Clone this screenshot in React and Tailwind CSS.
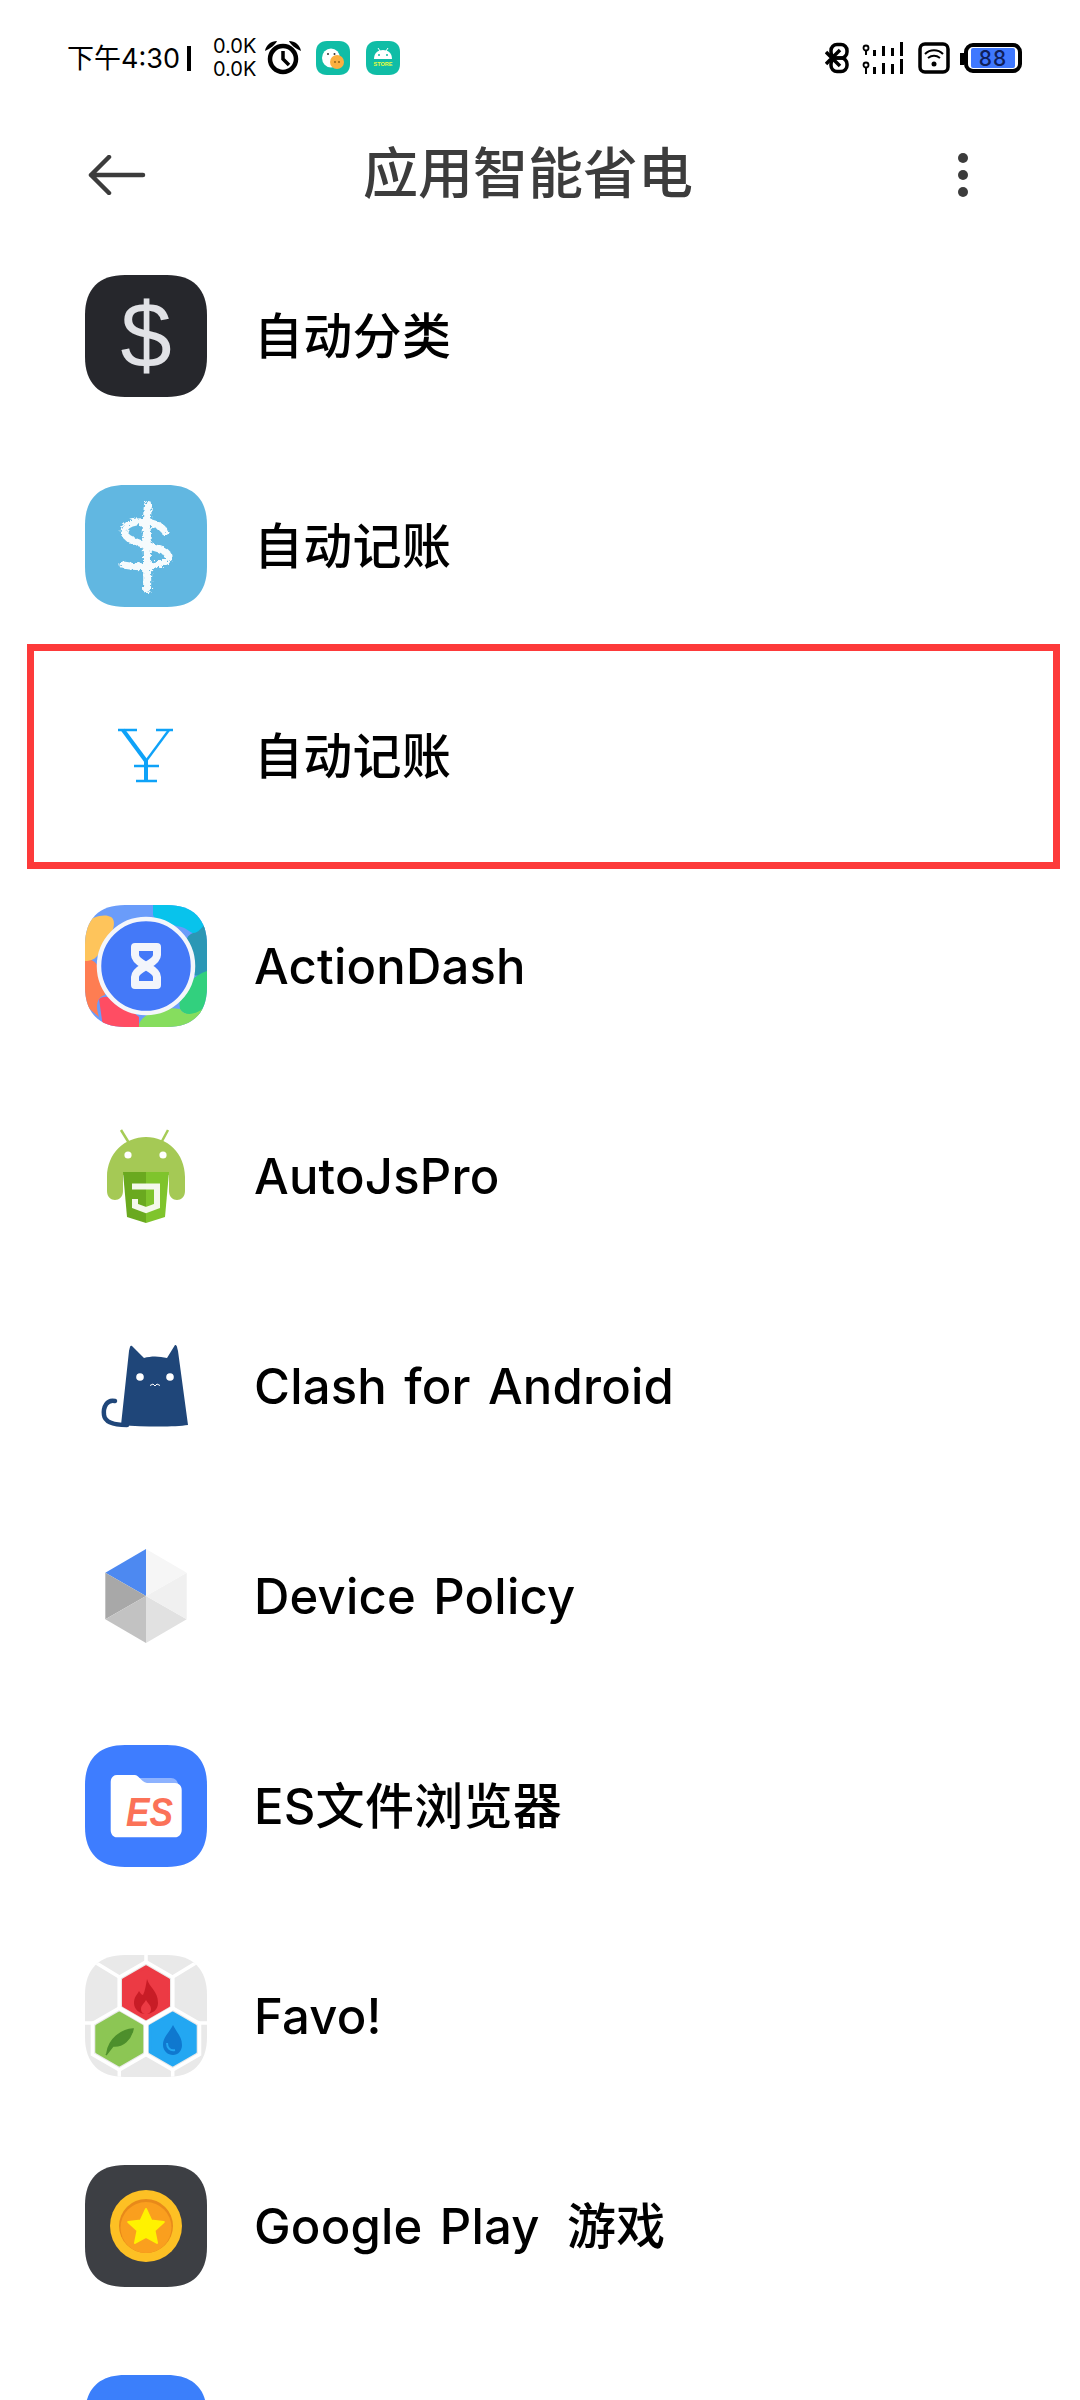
import React from "react";

const SQ = "M40 0H82C108 0 122 14 122 40V82C122 108 108 122 82 122H40C14 122 0 108 0 82V40C0 14 14 0 40 0Z";
const MINI = "M11 0H23C30 0 34 4 34 11V23C34 30 30 34 23 34H11C4 34 0 30 0 23V11C0 4 4 0 11 0Z";
const hex = (cx, cy, r) => {
  const w = r * 0.866;
  return `M${cx} ${cy - r}L${cx + w} ${cy - r / 2}V${cy + r / 2}L${cx} ${cy + r}L${cx - w} ${cy + r / 2}V${cy - r / 2}Z`;
};

function Box({ children }) {
  return (
    <svg viewBox="0 0 122 122" className="w-[122px] h-[122px] shrink-0 overflow-visible">
      {children}
    </svg>
  );
}

const DollarDark = () => (
  <Box>
    <path d={SQ} fill="#26272c" />
    <text x="61" y="92" textAnchor="middle" fontSize="92" fontFamily="Liberation Sans" fill="#e1e2e6">$</text>
  </Box>
);

const DollarChalk = () => (
  <Box>
    <defs>
      <filter id="chalk" x="-20%" y="-20%" width="140%" height="140%">
        <feTurbulence type="fractalNoise" baseFrequency="0.4" numOctaves="2" seed="4" />
        <feDisplacementMap in="SourceGraphic" scale="6" />
      </filter>
    </defs>
    <path d={SQ} fill="#61b7e1" />
    <g filter="url(#chalk)" fill="none" stroke="#f6fbfd" strokeLinecap="round" strokeLinejoin="round">
      <path d="M63 20C60 45 63 80 62 104" strokeWidth="8" />
      <path d="M80 47C76 38 58 35 47 38C37 42 36 50 47 55C60 62 80 62 84 71C84 80 60 84 38 80" strokeWidth="7" />
    </g>
  </Box>
);

const YenMark = () => (
  <Box>
    <g fill="none" stroke="#0ea2f8">
      <path d="M38 35L61 66" strokeWidth="4" />
      <path d="M84 35L61 66" strokeWidth="2.4" />
      <path d="M33 35H52M71 35H88" strokeWidth="2.6" />
      <path d="M61 65V86" strokeWidth="4" />
      <path d="M49 71H74M51 86H72" strokeWidth="2.6" />
    </g>
  </Box>
);

const ActionDash = () => (
  <Box>
    <defs>
      <clipPath id="ad"><path d={SQ} /></clipPath>
    </defs>
    <g clipPath="url(#ad)">
      <rect width="122" height="122" fill="#6a9cfa" />
      <path d="M68 0H122V22C122 30 108 30 104 26C96 18 72 22 68 10Z" fill="#08c3ec" />
      <path d="M108 28C114 28 116 22 122 18V70C112 72 106 70 102 66C102 50 96 32 108 28Z" fill="#2b97b5" />
      <path d="M122 66V104C116 112 100 112 95 104C92 90 104 72 122 66Z" fill="#32d07e" />
      <path d="M54 122C52 112 75 100 95 104C100 112 112 110 122 100V122Z" fill="#86dd5e" />
      <path d="M14 94C24 86 40 100 54 112C54 116 54 120 54 122H18Z" fill="#ff4d63" />
      <path d="M0 55C10 52 20 65 20 90C12 92 10 100 14 112L0 100Z" fill="#fe7d52" />
      <path d="M0 18C6 12 20 8 26 12C32 16 28 28 22 36C14 46 14 56 0 56Z" fill="#fec45b" />
    </g>
    <circle cx="61" cy="61" r="47" fill="#4479f8" stroke="#f4f6fb" strokeWidth="4.5" />
    <path d="M50 42H72V50C72 56 62 60 61 61C62 62 72 66 72 72V80H50V72C50 66 60 62 61 61C60 60 50 56 50 50Z" fill="none" stroke="#f3f5fb" strokeWidth="8" strokeLinejoin="round" />
  </Box>
);

const AutoJs = () => (
  <Box>
    <path d="M36 15L44 28M83 15L76 28" stroke="#a6cc56" strokeWidth="2.5" />
    <path d="M22 62C22 38 40 22 61 22C82 22 100 38 100 62V76C100 88 84 88 84 76V57H38V76C38 88 22 88 22 76Z" fill="#a5c955" />
    <rect x="38" y="40" width="46" height="20" fill="#a5c955" />
    <circle cx="43" cy="40" r="3.6" fill="#fff" />
    <circle cx="78" cy="40" r="3.6" fill="#fff" />
    <path d="M38 57H61V108L42 102Z" fill="#6aa91f" />
    <path d="M61 57H84L80 102L61 108Z" fill="#7fc42c" />
    <path d="M47 71.500H72V91L61 95L50 91V84" fill="none" stroke="#f4f8ec" strokeWidth="6" />
  </Box>
);

const Cat = () => (
  <Box>
    <path d="M30 76C22 74 18 82 19 90C20 98 30 100 42 100" fill="none" stroke="#1f4679" strokeWidth="4.5" strokeLinecap="round" />
    <path d="M47 21L59 33C66 31 74 31 82 33L90 20C92 20 92 22 93 26L103 100C90 102 60 102 36 100L44 26C45 22 45 20 47 21Z" fill="#1f4679" />
    <circle cx="55" cy="52" r="3.8" fill="#fff" />
    <circle cx="85" cy="52" r="3.8" fill="#fff" />
    <path d="M65 60.500L68 59L70 61L72 59L75 60.500" fill="none" stroke="#fff" strokeWidth="1" />
  </Box>
);

const Policy = () => (
  <Box>
    <path d="M61 14L61 61L20.300 37.700Z" fill="#4d89f1" />
    <path d="M20.300 37.700L61 61L20.300 84.300Z" fill="#a8a8a8" />
    <path d="M20.300 84.300L61 61V108Z" fill="#c2c2c2" />
    <path d="M61 108V61L101.700 84.300Z" fill="#e1e1e1" />
    <path d="M101.700 84.300L61 61L101.700 37.700Z" fill="#f0f0f0" />
    <path d="M101.700 37.700L61 61V14Z" fill="#f6f6f6" />
  </Box>
);

const EsIcon = () => (
  <Box>
    <path d={SQ} fill="#3e7dff" />
    <path d="M45 33H86C90 33 93 36 93 40H60Z" fill="#8db2ff" />
    <path d="M32 30H50C54 30 56 37 62 38H90C94 38 96.700 41 96.700 45V85C96.700 89 94 92.300 90 92.300H32C28 92.300 25.700 89 25.700 85V37C25.700 33 28 30 32 30Z" fill="#fff" />
    <text x="41" y="81" fontSize="40" fontWeight="700" fontStyle="italic" fontFamily="Liberation Sans" fill="#fb7258" textLength="47" lengthAdjust="spacingAndGlyphs">ES</text>
  </Box>
);

const Favo = () => (
  <Box>
    <defs>
      <clipPath id="fv"><path d={SQ} /></clipPath>
    </defs>
    <g clipPath="url(#fv)">
      <rect width="122" height="122" fill="#e9e9e9" />
      <g fill="none" stroke="#fff" strokeWidth="3.500">
        <path d={hex(61, 37.700, 31)} />
        <path d={hex(34.300, 84, 31)} />
        <path d={hex(87.700, 84, 31)} />
        <path d="M61 6V-6M34.300 22L8 6M87.700 22L114 6M8 68H-8M114 68H130M34.300 115V130M87.700 115V130" />
      </g>
    </g>
    <path d={hex(61, 37.700, 26)} fill="#ec3a44" stroke="#ec3a44" strokeWidth="3" strokeLinejoin="round" />
    <path d={hex(34.300, 84, 26)} fill="#8cc654" stroke="#8cc654" strokeWidth="3" strokeLinejoin="round" />
    <path d={hex(87.700, 84, 26)} fill="#23a7f2" stroke="#23a7f2" strokeWidth="3" strokeLinejoin="round" />
    <path d="M62 24C64 32 73 36 73 48C73 55 67 59 61 59C54 59 49 54 49 48C49 42 52 40 54 36C56 39 57 40 58 40C60 36 61 30 62 24Z" fill="#c81c26" />
    <path d="M61 45C63 49 66 50 66 54C66 57 64 59 61 59C58 59 56 57 56 54C56 50 59 49 61 45Z" fill="#ec3a44" />
    <path d="M22 98C24 84 36 75 48 74C46 84 38 92 28 91L21 100" fill="#4d8f2c" stroke="#4d8f2c" strokeWidth="1.500" />
    <path d="M88 70C92 78 97 82 97 90C97 96 93 100 88 100C83 100 78 96 78 90C78 82 84 78 88 70Z" fill="#0f78cf" />
    <path d="M82 88C82 93 85 96 90 95" fill="none" stroke="#23a7f2" strokeWidth="2" />
  </Box>
);

const Coin = () => (
  <Box>
    <path d={SQ} fill="#3d3f44" />
    <circle cx="61" cy="61" r="36" fill="#fdc024" />
    <circle cx="61" cy="61" r="27" fill="#e8891a" />
    <circle cx="61" cy="62.500" r="25.500" fill="#fa9f1e" />
    <path d="M61 44L66.300 55.500L78.800 57L69.500 65.500L72 78L61 71.800L50 78L52.500 65.500L43.200 57L55.700 55.500Z" fill="#fff200" stroke="#fff200" strokeWidth="2" strokeLinejoin="round" />
  </Box>
);

const Blue = () => (
  <Box>
    <path d={SQ} fill="#3b7ffb" />
  </Box>
);

const rows = [
  ["自动分类", DollarDark],
  ["自动记账", DollarChalk],
  ["自动记账", YenMark, true],
  ["ActionDash", ActionDash],
  ["AutoJsPro", AutoJs],
  ["Clash for Android", Cat],
  ["Device Policy", Policy],
  ["ES文件浏览器", EsIcon],
  ["Favo!", Favo],
  ["Google Play 游戏", Coin],
  ["", Blue],
];

function Label({ text }) {
  const parts = text.split(/([\u4e00-\u9fff]+)/).filter(Boolean);
  return (
    <span className="ml-[47px] whitespace-pre text-[49px] leading-none text-black">
      {parts.map((p, i) =>
        /[\u4e00-\u9fff]/.test(p) ? (
          <span key={i} className={i > 0 && parts[i - 1].endsWith(" ") ? "ml-[10px] font-medium tracking-[0.3px]" : "font-medium tracking-[0.3px]"}>{p}</span>
        ) : (
          <span key={i} className="font-[550] tracking-[0.2px] [word-spacing:4px]">{p}</span>
        )
      )}
    </span>
  );
}

function Row({ label, Icon, boxed }) {
  return (
    <div className="relative flex h-[210px] items-center pl-[85px] shrink-0">
      <Icon />
      <Label text={label} />
      {boxed && <div className="absolute left-[27px] top-[-7px] h-[225px] w-[1033px] border-[7px] border-[#fd3a3a]" />}
    </div>
  );
}

function StatusBar() {
  return (
    <div className="flex h-[116px] items-center pl-[67px] text-black shrink-0">
      <span className="w-[112px] shrink-0 text-[27px] leading-none font-normal whitespace-nowrap">下午4:30</span>
      <span className="ml-[8px] h-[25px] w-[4px] bg-black" />
      <div className="ml-[22px] flex w-[44px] flex-col text-[20px] leading-[23px]">
        <span>0.0K</span>
        <span>0.0K</span>
      </div>
      <svg viewBox="0 0 36 34" className="ml-[8px] h-[34px] w-[36px]">
        <circle cx="18" cy="18" r="13" fill="none" stroke="#000" strokeWidth="4.500" />
        <path d="M18 10V18L24 24" fill="none" stroke="#000" strokeWidth="3.500" />
        <path d="M0 10C1 4 6 0 12 0C11 3 5 8 0 10ZM36 10C35 4 30 0 24 0C25 3 31 8 36 10Z" fill="#000" />
      </svg>
      <svg viewBox="0 0 34 34" className="ml-[15px] h-[34px] w-[34px]">
        <path d={MINI} fill="#10bda6" />
        <ellipse cx="15" cy="17" rx="9" ry="9.500" fill="#fff" />
        <circle cx="21" cy="21" r="7" fill="#fbb040" />
        <circle cx="12" cy="13" r="1" fill="#333" />
        <circle cx="18.500" cy="13" r="1" fill="#333" />
        <circle cx="19" cy="21" r="0.900" fill="#8a5a10" />
        <circle cx="23" cy="21" r="0.900" fill="#8a5a10" />
      </svg>
      <svg viewBox="0 0 34 34" className="ml-[16px] h-[34px] w-[34px]">
        <path d={MINI} fill="#10bda6" />
        <path d="M8 18C8 12 12 9 17 9C22 9 26 12 26 18Z" fill="#fff" />
        <path d="M12 7L14 10M22 7L20 10" stroke="#fff" strokeWidth="1" />
        <circle cx="13" cy="14" r="1" fill="#10bda6" />
        <circle cx="21" cy="14" r="1" fill="#10bda6" />
        <text x="17" y="25" textAnchor="middle" fontSize="5.500" fontWeight="700" fontFamily="Liberation Sans" fill="#e8ff3c">STORE</text>
      </svg>
      <svg viewBox="0 0 25 32" className="ml-[425px] h-[32px] w-[25px]">
        <path d="M1 10L15 24M1 22L15 8" stroke="#000" strokeWidth="3.500" fill="none" />
        <rect x="6" y="2.500" width="16" height="13.500" rx="6" fill="none" stroke="#000" strokeWidth="3.500" />
        <rect x="6" y="16" width="16" height="13.500" rx="6" fill="none" stroke="#000" strokeWidth="3.500" />
      </svg>
      <svg viewBox="0 0 43 33" className="ml-[12px] h-[33px] w-[43px]">
        <g fill="#000">
          <circle cx="4" cy="6" r="2.500" fill="none" stroke="#000" strokeWidth="1.800" />
          <rect x="3" y="8" width="2" height="5" />
          <rect x="11" y="8" width="3" height="6" />
          <rect x="20" y="4" width="3" height="10" />
          <rect x="29" y="6" width="3" height="8" />
          <rect x="38" y="0" width="3" height="14" />
          <circle cx="4" cy="23" r="2.500" fill="none" stroke="#000" strokeWidth="1.800" />
          <rect x="3" y="25" width="2" height="7" />
          <rect x="11" y="25" width="3" height="7" />
          <rect x="20" y="21" width="3" height="11" />
          <rect x="29" y="22" width="3" height="10" />
          <rect x="38" y="17" width="3" height="15" />
        </g>
      </svg>
      <svg viewBox="0 0 32 32" className="ml-[13px] h-[32px] w-[32px]">
        <rect x="2" y="2" width="28" height="28" rx="5" fill="none" stroke="#000" strokeWidth="3.500" />
        <path d="M7 12C12 7 20 7 25 12M10 16C14 13 18 13 22 16" fill="none" stroke="#000" strokeWidth="2" />
        <circle cx="16" cy="22" r="2.500" fill="#000" />
      </svg>
      <div className="relative ml-[10px] h-[30px] w-[62px] shrink-0">
        <div className="absolute left-0 top-[10px] h-[12px] w-[4px] bg-black" />
        <div className="absolute left-[4px] top-0 flex h-[30px] w-[58px] items-center justify-center rounded-[9px] border-[4px] border-black">
          <div className="flex h-[20px] w-[44px] items-center justify-center rounded-[2px] bg-[#3f78ff] text-[21px] leading-none font-medium text-[#10205a] tracking-[1px]">88</div>
        </div>
      </div>
    </div>
  );
}

function Header() {
  return (
    <div className="flex h-[115px] items-center pt-[3px] pl-[88px] shrink-0">
      <svg viewBox="0 0 58 40" className="h-[40px] w-[58px] shrink-0">
        <path d="M3 20H55M21 2L3 20L21 38" fill="none" stroke="#3c3c3c" strokeWidth="4.500" strokeLinecap="round" strokeLinejoin="round" />
      </svg>
      <span className="mb-[3px] ml-[217px] text-[55px] leading-none font-medium text-[#3c3c3c]">应用智能省电</span>
      <svg viewBox="0 0 10 44" className="ml-[265px] h-[44px] w-[10px] shrink-0">
        <circle cx="5" cy="5" r="5" fill="#3c3c3c" />
        <circle cx="5" cy="22" r="5" fill="#3c3c3c" />
        <circle cx="5" cy="39" r="5" fill="#3c3c3c" />
      </svg>
    </div>
  );
}

export default function App() {
  return (
    <div className="flex h-[2400px] w-[1080px] flex-col overflow-hidden bg-white font-['Inter','Noto_Sans_CJK_SC',sans-serif]">
      <StatusBar />
      <Header />
      {rows.map(([label, Icon, boxed], i) => (
        <Row key={i} label={label} Icon={Icon} boxed={boxed} />
      ))}
    </div>
  );
}
